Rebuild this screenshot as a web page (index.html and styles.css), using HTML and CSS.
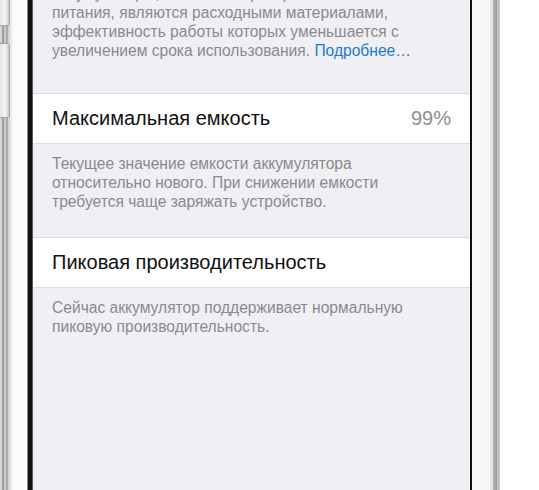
FILE: index.html
```html
<!DOCTYPE html>
<html>
<head>
    <title>Аккумулятор</title>
    <link rel="stylesheet" href="styles.css">
</head>
<body>
    <div class="phone">
        <div class="bezel-left">
            <span class="key key-mute"></span>
            <span class="key key-volume"></span>
        </div>
        <div class="screen">
            <p class="note note-first">Аккумуляторы, как и все перезаряжаемые элементы<br>питания, являются расходными материалами,<br>эффективность работы которых уменьшается с<br>увеличением срока использования. <a href="#">Подробнее…</a></p>

            <div class="row">
                <span class="row-title">Максимальная емкость</span>
                <span class="row-value">99%</span>
            </div>
            <p class="note">Текущее значение емкости аккумулятора<br>относительно нового. При снижении емкости<br>требуется чаще заряжать устройство.</p>

            <div class="row row-second">
                <span class="row-title">Пиковая производительность</span>
            </div>
            <p class="note">Сейчас аккумулятор поддерживает нормальную<br>пиковую производительность.</p>
        </div>
        <div class="bezel-right"></div>
    </div>
</body>
</html>
```

FILE: styles.css
```css
body {
    margin: 0;
    background-color: #fff;
    font-family: "Liberation Sans", Arial, sans-serif;
    overflow: hidden;
}
.phone {
    display: flex;
    width: 500px;
    height: 490px;
}
.bezel-left {
    position: relative;
    width: 33px;
    flex-shrink: 0;
    background: linear-gradient(to right,
        #d6d6d6 0, #d6d6d6 2px,
        #9e9e9e 2px, #9e9e9e 4px,
        #c9c9c9 4px, #c9c9c9 6px,
        #acacac 6px, #acacac 8px,
        #d4d4d4 8px, #d4d4d4 10px,
        #ebebeb 10px, #ebebeb 12px,
        #fafafa 12px, #fdfdfd 27px,
        #8a8a8a 27px, #8a8a8a 28px,
        #111 28px, #111 32px,
        #5a5a5a 32px, #5a5a5a 33px);
}
.key {
    position: absolute;
    left: -1px;
    width: 9px;
    border: 1px solid #a4a4a4;
    border-radius: 0 3px 3px 0;
    background: linear-gradient(to right, #e4e4e4, #f4f4f4 60%, #c8c8c8);
}
.key-mute {
    top: -6px;
    height: 30px;
}
.key-volume {
    top: 43px;
    height: 73px;
}
.screen {
    flex: 1;
    background-color: #efeff4;
    overflow: hidden;
}
.bezel-right {
    width: 30px;
    flex-shrink: 0;
    background: linear-gradient(to right,
        #111 0, #111 2px,
        #fafafa 2px, #f6f6f6 20px,
        #e2e2e2 20px, #e2e2e2 23px,
        #b4b4b4 23px, #9a9a9a 27px,
        #c4c4c4 27px, #c4c4c4 30px);
}
.note {
    margin: 0;
    padding: 10px 19px 0;
    font-size: 15.6px;
    line-height: 19px;
    white-space: nowrap;
    color: #8a8a8f;
}
.note-first {
    margin-top: -16px;
    padding-top: 0;
    padding-bottom: 33px;
}
.note a {
    color: #1b7bd0;
    text-decoration: none;
}
.row {
    display: flex;
    justify-content: space-between;
    align-items: center;
    height: 49px;
    padding: 0 19px;
    background-color: #fff;
    border-top: 1px solid #dcdce0;
    border-bottom: 1px solid #dcdce0;
}
.row-second {
    margin-top: 26px;
}
.row-title {
    font-size: 20px;
    color: #111;
}
.row-value {
    font-size: 20px;
    color: #8e8e93;
}
```
